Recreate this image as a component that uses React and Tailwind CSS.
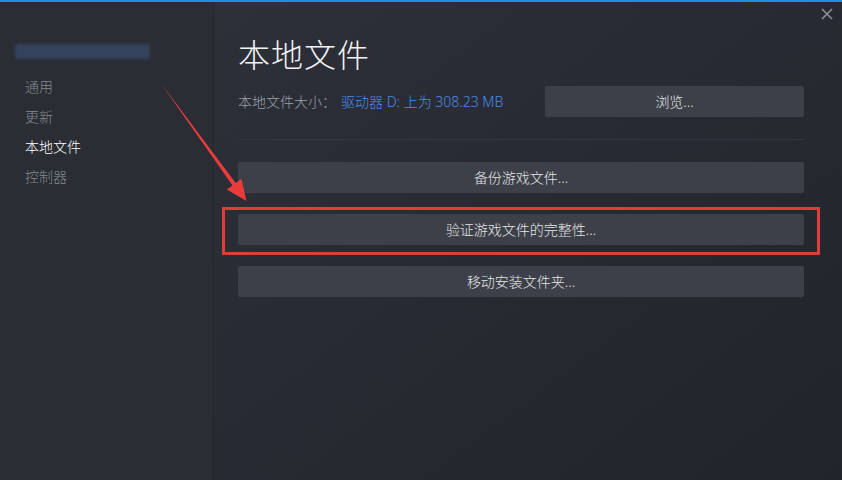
const menu = [
  { label: '通用', active: false },
  { label: '更新', active: false },
  { label: '本地文件', active: true },
  { label: '控制器', active: false },
];

const actions = ['备份游戏文件...', '验证游戏文件的完整性...', '移动安装文件夹...'];

const font = { fontFamily: '"Noto Sans", "Noto Sans CJK SC", sans-serif' };

function ActionButton({ children, className = '' }) {
  return (
    <button
      className={`flex h-[31px] items-center justify-center rounded-[2px] bg-[#3d4049] text-[14px] font-light text-[#e4e6e8] ${className}`}
    >
      {children}
    </button>
  );
}

export default function App() {
  return (
    <div className="relative h-[480px] w-[842px] overflow-hidden bg-[#262930]" style={font}>
      <div className="h-[2px] bg-[#1f8ee0]" />
      <div className="flex h-[478px]">
        <aside className="w-[214px] border-r border-[#24272d] bg-[#2a2d34]">
          <div className="ml-[15px] mt-[42px] h-[15px] w-[135px] rounded-[2px] bg-[#34425d] blur-[1.5px]" />
          <ul className="mt-[13px] pl-[25px]">
            {menu.map((item) => (
              <li
                key={item.label}
                className={`h-[30px] text-[14px] font-light leading-[30px] ${item.active ? 'text-white' : 'text-[#868a92]'}`}
              >
                {item.label}
              </li>
            ))}
          </ul>
        </aside>

        <main className="flex-1 bg-gradient-to-br from-[#2d3039] to-[#22242b] pl-[24px] pr-[38px] pt-[33px]">
          <h1 className="text-[32px] font-light leading-[40px] tracking-[1px] text-[#f2f3f4]">本地文件</h1>
          <div className="mt-[11px] flex h-[31px] items-center">
            <span className="text-[14px] font-light text-[#9ba0a7]">本地文件大小：</span>
            <span className="ml-[5px] text-[14px] font-light text-[#4a8be6]">驱动器 D: 上为 308.23 MB</span>
            <ActionButton className="ml-auto w-[259px]">浏览...</ActionButton>
          </div>
          <div className="mt-[22px] h-px bg-[#343740]" />
          <div className="mt-[22px] flex flex-col gap-[21px]">
            {actions.map((label) => (
              <ActionButton key={label} className="w-full">
                {label}
              </ActionButton>
            ))}
          </div>
        </main>
      </div>

      <svg className="absolute right-[9px] top-[8px]" width="12" height="12" viewBox="0 0 12 12">
        <path d="M1 1 L11 11 M11 1 L1 11" stroke="#8b9098" strokeWidth="1.6" />
      </svg>

      <div className="absolute left-[222px] top-[207px] h-[48px] w-[598px] border-[3px] border-[#e03c3c]" />

      <svg className="absolute left-0 top-0" width="842" height="480" viewBox="0 0 842 480">
        <polygon
          points="160,82 235.7,183 241.4,178.9 246.5,201 226.8,189.5 232.5,185.4"
          fill="#ec3b3b"
        />
      </svg>
    </div>
  );
}
